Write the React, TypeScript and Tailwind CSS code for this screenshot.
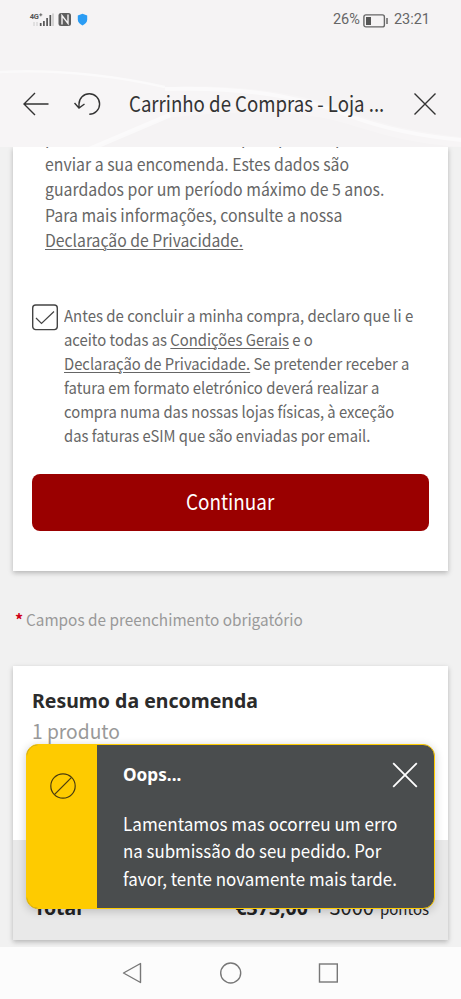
import type { ReactNode } from 'react';

function Line({ className = '', children }: { className?: string; children: ReactNode }) {
  return (
    <span className="block whitespace-nowrap">
      <span className={`inline-block origin-left ${className}`}>{children}</span>
    </span>
  );
}

function TextLink({ children }: { children: ReactNode }) {
  return <a className="underline decoration-1 underline-offset-2">{children}</a>;
}

function StatusBar() {
  return (
    <div className="flex h-10 items-center justify-between pl-[29px] pr-[31px] text-[#666]">
      <svg width="60" height="20" viewBox="0 0 60 20" className="shrink-0">
        <text x="0.8" y="9" fontFamily="Roboto" fontSize="7.500" fontWeight="700" fill="#555" textLength="9">4G</text>
        <path d="M10.300 4.800h3M11.800 3.300v3" stroke="#666" strokeWidth="1" />
        <path d="M5 12v4M8 12v4" stroke="#ccc" strokeWidth="1" />
        <path d="M11.700 13v3M14.900 11v5M18.100 8v8M21.300 5v11" stroke="#555" strokeWidth="1.700" />
        <path d="M24 3.500v12.500" stroke="#c8c8c8" strokeWidth="1.500" />
        <rect x="29.500" y="3" width="12.500" height="13" rx="2.500" fill="#5e5e5e" />
        <path d="M33 14.500V5.500l6 8V4.500" stroke="#f5f3f4" strokeWidth="1.400" fill="none" />
        <path d="M53.500 3.800 58.200 5.500v4c0 2.800-2 4.700-4.700 5.900C50.800 14.200 48.800 12.300 48.800 9.500V5.500Z" fill="#2a9cf4" />
      </svg>
      <div className="flex items-center pt-px font-['Roboto',sans-serif] text-[14.500px] leading-none">
        <span>26%</span>
        <svg width="26" height="14" viewBox="0 0 26 14" className="ml-[3px] mr-[5px]" fill="none">
          <rect x="0.900" y="0.900" width="20.500" height="12" rx="2" stroke="#666" strokeWidth="1.400" />
          <rect x="3" y="3" width="5" height="8" fill="#555" />
          <path d="M24 4v6" stroke="#666" strokeWidth="1.500" />
        </svg>
        <span>23:21</span>
      </div>
    </div>
  );
}

function Header() {
  return (
    <header className="relative h-[147px] shrink-0 bg-[#f5f3f4]">
      <svg className="absolute inset-0" width="461" height="147" viewBox="0 0 461 147" fill="none">
        <path d="M165 87C225 84 300 90 350 112C390 128 430 133 461 137V147C400 143 370 130 340 122C290 108 220 112 165 118L95 147H0V73C60 68 115 74 165 87Z" fill="#fff" opacity="0.2" />
        <path d="M0 72C60 69 115 76 165 87" stroke="#fff" strokeWidth="2.500" opacity="0.5" />
        <path d="M90 149 170 115" stroke="#fff" strokeWidth="5" opacity="0.5" />
        <path d="M165 89C260 86 315 102 350 116C390 131 430 137 461 140" stroke="#fff" strokeWidth="4" opacity="0.5" />
      </svg>
      <div className="relative">
        <StatusBar />
        <div className="flex h-[77px] items-end pl-[22px] pr-[24px]">
          <svg width="27" height="26" viewBox="0 0 27 26" fill="none" stroke="#333" strokeWidth="1.400" className="shrink-0">
            <path d="M13 2 2 13l11 11M2 13h24.500" />
          </svg>
          <svg width="28" height="26" viewBox="0 0 28 26" fill="none" stroke="#333" strokeWidth="1.400" className="ml-[25px] shrink-0">
            <path d="M5 16.500V13a10.300 10.300 0 1 1 10.300 10.300M0.500 12l4.500 5 5.500-4" />
          </svg>
          <h1 className="mb-px ml-[27px] w-[256px] font-['Noto_Sans_CJK_JP',sans-serif] text-[21px] leading-[26px] text-[#333]">
            <Line className="scale-x-[0.887]">Carrinho de Compras - Loja ...</Line>
          </h1>
          <svg width="24" height="26" viewBox="0 0 24 26" stroke="#333" strokeWidth="1.400" className="ml-auto shrink-0">
            <path d="M1.500 2.500 22.500 23.500M22.500 2.500 1.500 23.500" />
          </svg>
        </div>
      </div>
    </header>
  );
}

function TermsCard() {
  return (
    <section className="h-[424px] overflow-hidden bg-white px-[19px] shadow-[0_2px_5px_rgba(0,0,0,0.25)]">
      <p className="-mt-[22px] ml-[13px] text-[17px] leading-[25.600px]">
        <Line className="-translate-y-px scale-x-[0.94]">pessoais serão solicitados para poder após</Line>
        <Line className="scale-x-[0.932]">enviar a sua encomenda. Estes dados são</Line>
        <Line className="scale-x-[0.932]">guardados por um período máximo de 5 anos.</Line>
        <Line className="scale-x-[0.933]">Para mais informações, consulte a nossa</Line>
        <Line className="scale-x-[0.926]">
          <TextLink>Declaração de Privacidade.</TextLink>
        </Line>
      </p>

      <div className="mt-[51px] flex">
        <svg width="26" height="27" viewBox="0 0 26 27" fill="none" stroke="#444" className="mr-[6px] shrink-0">
          <rect x="0.700" y="1" width="24.600" height="24.600" rx="3" strokeWidth="1.400" />
          <path d="m4 14 5.500 5.500L22 7.500" strokeWidth="1.200" />
        </svg>
        <p className="-mt-px mb-px w-[350px] text-[16px] leading-6">
          <Line className="scale-x-[0.935]">Antes de concluir a minha compra, declaro que li e</Line>
          <Line className="scale-x-[0.927]">aceito todas as <TextLink>Condições Gerais</TextLink> e o</Line>
          <Line className="scale-x-[0.924]"><TextLink>Declaração de Privacidade.</TextLink> Se pretender receber a</Line>
          <Line className="scale-x-[0.929]">fatura em formato eletrónico deverá realizar a</Line>
          <Line className="scale-x-[0.925]">compra numa das nossas lojas físicas, à exceção</Line>
          <Line className="scale-x-[0.922]">das faturas eSIM que são enviadas por email.</Line>
        </p>
      </div>

      <button className="mt-[26px] flex h-[57px] w-[397px] items-center justify-center rounded-lg bg-[#9a0000] pb-[2px] text-[21px] text-white">
        <span className="scale-x-[0.9]">Continuar</span>
      </button>
    </section>
  );
}

function OrderSummary() {
  return (
    <section className="flex h-[274px] flex-col bg-white shadow-[0_2px_5px_rgba(0,0,0,0.25)]">
      <div className="px-[19px] pt-[20px]">
        <h2 className="font-['Noto_Sans',sans-serif] text-[20px] font-bold leading-[30px] text-[#2b2b2b]">
          <Line className="scale-x-[0.974]">Resumo da encomenda</Line>
        </h2>
        <p className="-mt-px text-[20px] leading-[31px] text-[#999]">
          <Line className="scale-x-[0.96]">1 produto</Line>
        </p>
      </div>
      <div className="mt-auto flex h-[100px] items-baseline justify-between bg-[#e9e9e9] pl-[21px] pr-[19px] pt-[53px] leading-7 text-[#222]">
        <span className="font-['Noto_Sans',sans-serif] text-[19.500px] font-bold">Total</span>
        <span className="flex items-baseline gap-[6px] whitespace-nowrap">
          <b className="font-['Noto_Sans',sans-serif] text-[19.500px]">€373,00</b>
          <span className="text-[20px]">+ 3000</span>
          <span className="text-[15px]">pontos</span>
        </span>
      </div>
    </section>
  );
}

function ErrorToast() {
  return (
    <div className="absolute left-[26px] top-[744px] flex h-[165px] w-[409px] overflow-hidden rounded-xl border-[1.500px] border-[#fecb00] bg-[#4a4d4e] text-white shadow-[0_2px_10px_rgba(0,0,0,0.2)]">
      <div className="flex w-[70px] shrink-0 justify-center bg-[#fecb00] pl-px pt-[28px]">
        <svg width="26" height="26" viewBox="0 0 26 26" fill="none" stroke="#4a3c10" strokeWidth="1.200">
          <circle cx="13" cy="13" r="12.200" />
          <path d="M21.600 4.400 4.400 21.600" />
        </svg>
      </div>
      <div className="flex-1 pl-[26px] pt-4">
        <div className="flex h-[30px] justify-between">
          <strong className="font-['Noto_Sans',sans-serif] text-[18px] leading-[27px]">
            <Line className="scale-x-[0.955]">Oops...</Line>
          </strong>
          <svg width="26" height="26" viewBox="0 0 26 26" stroke="#fff" strokeWidth="1.800" className="mr-4 mt-px">
            <path d="M1.200 1.200 24.800 24.800M24.800 1.200 1.200 24.800" />
          </svg>
        </div>
        <p className="mt-[19px] w-[290px] text-[18px] leading-[27.300px]">
          <Line className="scale-x-[0.95]">Lamentamos mas ocorreu um erro</Line>
          <Line className="scale-x-[0.937]">na submissão do seu pedido. Por</Line>
          <Line className="scale-x-[0.94]">favor, tente novamente mais tarde.</Line>
        </p>
      </div>
    </div>
  );
}

function NavBar() {
  return (
    <nav className="flex h-[52px] shrink-0 items-center justify-center gap-[76px] bg-[#fcfcfc]">
      <svg width="22" height="22" viewBox="0 0 22 22" fill="none" stroke="#777" strokeWidth="1.400" strokeLinejoin="round">
        <path d="M18.500 1.500v19L1.500 11Z" />
      </svg>
      <svg width="22" height="22" viewBox="0 0 22 22" fill="none" stroke="#777" strokeWidth="1.400">
        <circle cx="10.700" cy="11" r="10" />
      </svg>
      <svg width="22" height="22" viewBox="0 0 22 22" fill="none" stroke="#777" strokeWidth="1.400">
        <rect x="1.500" y="2" width="17.800" height="18" />
      </svg>
    </nav>
  );
}

export default function App() {
  return (
    <div className="relative flex h-[999px] w-[461px] flex-col overflow-hidden bg-[#f1f1f1] font-['Noto_Sans_CJK_JP',sans-serif] text-[#666]">
      <Header />
      <main className="h-[800px] overflow-hidden px-[13px]">
        <TermsCard />
        <p className="flex h-[95px] items-center gap-[3px] pl-[2px] text-[16px] text-[#999]">
          <span className="font-bold text-[#d00018]">*</span>
          <Line className="scale-x-[0.958]">Campos de preenchimento obrigatório</Line>
        </p>
        <OrderSummary />
      </main>
      <NavBar />
      <ErrorToast />
    </div>
  );
}
